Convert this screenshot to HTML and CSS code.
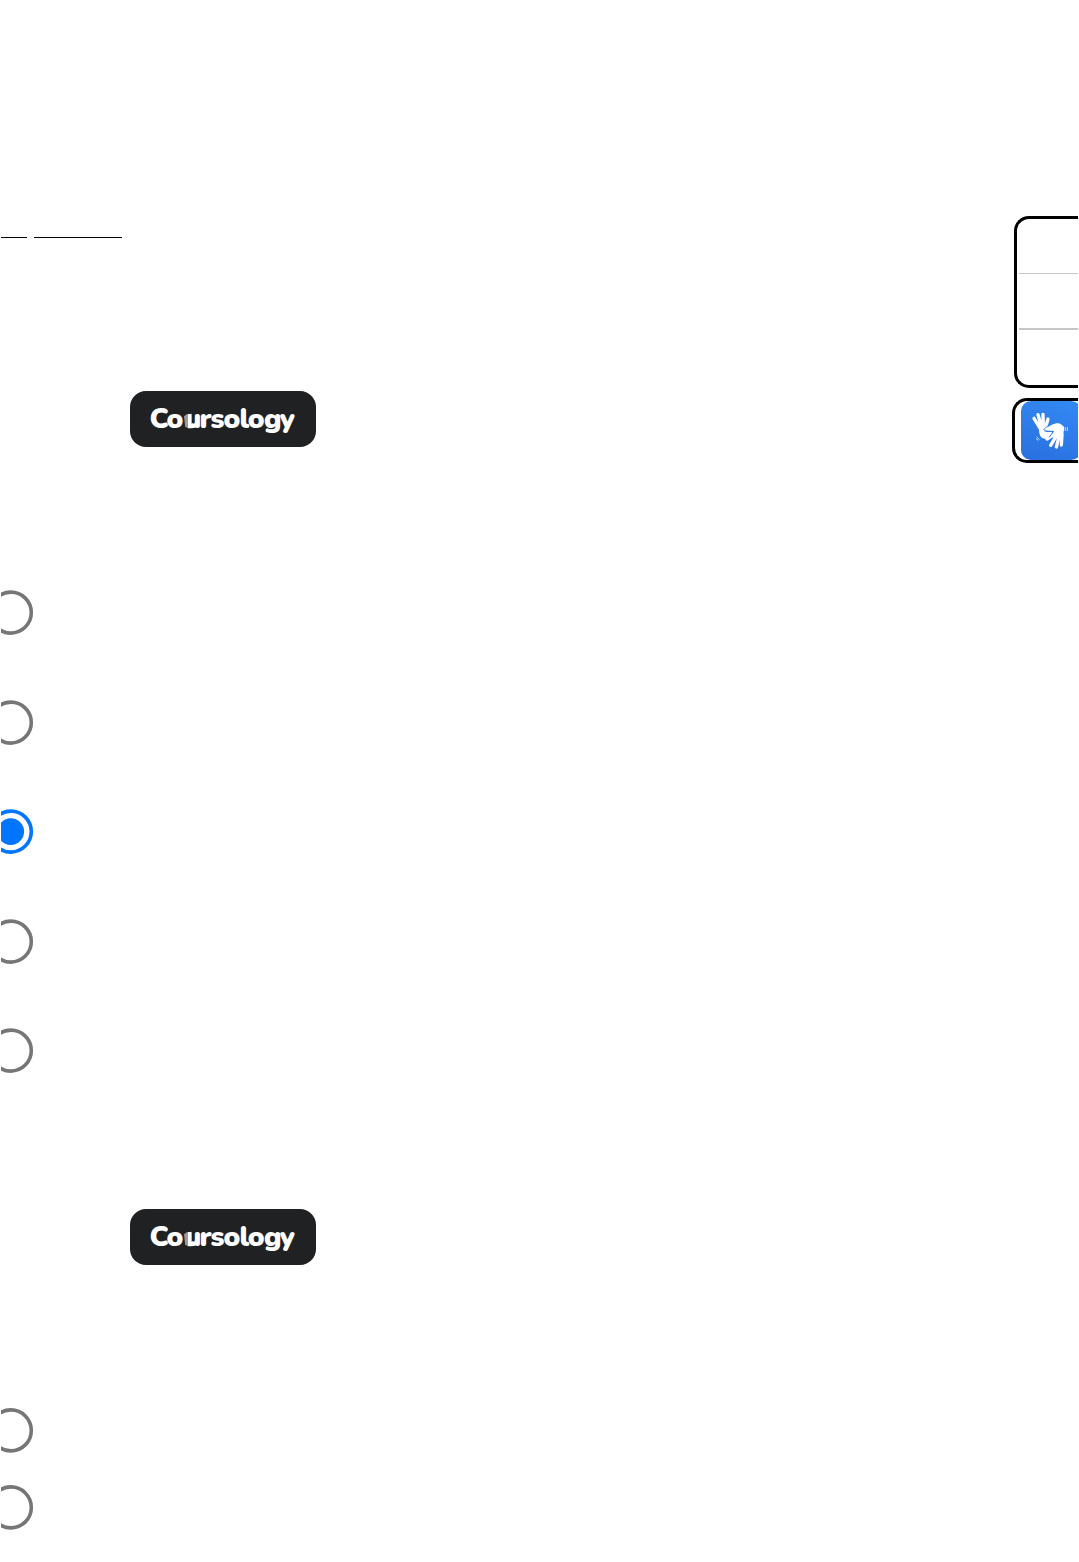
FILE: index.html
```
<!DOCTYPE html>
<html lang="en">

<head>
    <meta charset="UTF-8">
    <meta name="viewport" content="width=device-width, initial-scale=1.0">
    <title>Coursology</title>
    <link rel="stylesheet" href="styles.css">
</head>

<body>
    <div class="page">
        <main class="content">
            <div class="links">
                <span class="link-line short"></span>
                <span class="link-line"></span>
            </div>

            <button class="badge">
                <svg width="186" height="56" viewBox="0 0 186 56">
                    <text class="logo-text" y="36.5" x="19.5 36.6 54.4 69.6 80.4 93.4 109.4 117.8 134 149.8">Coursology</text>
                    <!-- pages of the book inside the "u" -->
                    <path class="logo-gap" d="M53.6 21h4v17h-4z" />
                    <path class="logo-page" d="M54 25.2l3.4-2.5v14l-2.2-.8z" />
                    <path class="logo-cover" d="M57.8 23.8l3.8-1v8.6c-.8 2.9-1.8 4.2-3.8 5.2zM57 37c2.5-1.5 4-3 5-5.2 1 1.7 3.8 1.3 5-.7l2 3c-2 3-6 3.5-12 2.9z" />
                </svg>
            </button>

            <div class="answers">
                <svg class="radio" viewBox="0 0 45 45"><circle cx="21.8" cy="22.6" r="20.5" /></svg>
                <svg class="radio" viewBox="0 0 45 45"><circle cx="21.8" cy="22.6" r="20.5" /></svg>
                <svg class="radio checked" viewBox="0 0 45 45"><circle cx="21.8" cy="22.6" r="20.5" /><circle class="dot" cx="21.8" cy="22.6" r="13.3" /></svg>
                <svg class="radio" viewBox="0 0 45 45"><circle cx="21.8" cy="22.6" r="20.5" /></svg>
                <svg class="radio" viewBox="0 0 45 45"><circle cx="21.8" cy="22.6" r="20.5" /></svg>
            </div>

            <button class="badge second">
                <svg width="186" height="56" viewBox="0 0 186 56">
                    <text class="logo-text" y="36.5" x="19.5 36.6 54.4 69.6 80.4 93.4 109.4 117.8 134 149.8">Coursology</text>
                    <path class="logo-gap" d="M53.6 21h4v17h-4z" />
                    <path class="logo-page" d="M54 25.2l3.4-2.5v14l-2.2-.8z" />
                    <path class="logo-cover" d="M57.8 23.8l3.8-1v8.6c-.8 2.9-1.8 4.2-3.8 5.2zM57 37c2.5-1.5 4-3 5-5.2 1 1.7 3.8 1.3 5-.7l2 3c-2 3-6 3.5-12 2.9z" />
                </svg>
            </button>

            <div class="answers compact">
                <svg class="radio" viewBox="0 0 45 45"><circle cx="21.8" cy="22.4" r="20.5" /></svg>
                <svg class="radio" viewBox="0 0 45 45"><circle cx="21.8" cy="22.4" r="20.5" /></svg>
            </div>
        </main>

        <aside class="tools">
            <div class="tool-list">
                <div class="tool"></div>
                <div class="tool thick"></div>
                <div class="tool last"></div>
            </div>
            <div class="sign-box">
                <div class="sign">
                    <svg class="hands" width="48" height="54" viewBox="0 0 144 150">
                        <g class="fingers">
                            <path d="M18 40l18 29M30 29l10 34M45 28l1 35M60 42l-7 24" />
                            <path d="M82 85l-25 17M86 91l-18 30M94 92l-9 34M102 90l-2 30" />
                        </g>
                        <path class="palm" d="M31 62l27-3 2 8-10 9 7 5 16-1-2 7c-5 9-10 13-19 14-12 0-16-8-18-17-1-8-2-15-3-22z" />
                        <path class="palm" d="M51 73c10-8 17-14 29-17 8-2 14-2 18 1l10 8c2 4 0 9-1 15l-2 16-29 5-4-8 6-15-19-1c-5 0-10-1-8-4z" />
                        <path class="crease" d="M47 75c2-5 8-9 14-13M48 76c3 5 18 3 27 3-2 7-8 13-12 18" />
                        <path class="motion" d="M112 67v11M118 66v12M26 95l8 9M24 101l7 5" />
                    </svg>
                </div>
            </div>
        </aside>
    </div>
</body>

</html>
```
FILE: styles.css
```
* {
    box-sizing: border-box;
}

body {
    margin: 0;
    padding: 0 1px;
    background: #fff;
    font-family: Lato, sans-serif;
}

.page {
    display: flex;
    justify-content: space-between;
    height: 1562px;
    overflow: hidden;
}

.content {
    width: 400px;
}

.links {
    display: flex;
    gap: 7px;
    margin-top: 237px;
}

.link-line {
    width: 88px;
    height: 1px;
    background: #000;
}

.link-line.short {
    width: 26px;
}

.badge {
    display: block;
    width: 186px;
    height: 56px;
    margin: 153px 0 0 129px;
    padding: 0;
    border: 0;
    border-radius: 16px;
    background: #202123;
}

.badge.second {
    margin-top: 135.6px;
}

.badge svg {
    display: block;
}

.logo-text {
    font-family: Nunito, Lato, sans-serif;
    font-size: 28px;
    font-weight: 900;
    fill: #fff;
}

.logo-gap {
    fill: #202123;
}

.logo-page {
    fill: #98999a;
}

.logo-cover {
    fill: #fff;
}

/* the left part of every radio is cut off by the page edge */
.answers {
    display: flex;
    flex-direction: column;
    gap: 64.5px;
    margin: 143.3px 0 0 -12px;
}

.answers.compact {
    gap: 31.5px;
    margin-top: 143.3px;
}

.radio {
    display: block;
    width: 45px;
    height: 45px;
    fill: none;
    stroke: #767676;
    stroke-width: 3.6;
}

.radio.checked {
    stroke: #0075ff;
}

.radio .dot {
    fill: #0075ff;
    stroke: none;
}

.tools {
    display: flex;
    flex-direction: column;
    align-items: flex-end;
    padding-top: 216px;
}

.tool-list {
    width: 64px;
    height: 172px;
    padding-left: 2px;
    border: 3px solid #000;
    border-right: 0;
    border-radius: 15px 0 0 15px;
}

.tool {
    height: 55px;
    border-bottom: 1px solid #c6c6c6;
}

.tool.thick {
    height: 56px;
    border-bottom-width: 2px;
}

.tool.last {
    border: 0;
}

.sign-box {
    width: 66px;
    height: 65px;
    margin-top: 10px;
    padding-left: 6px;
    border: 3px solid #000;
    border-right: 0;
    border-radius: 15px 0 0 15px;
}

.sign {
    width: 60px;
    height: 59px;
    border-radius: 10px;
    background: linear-gradient(200deg, #338af3, #296fdf);
}

.hands {
    display: block;
    margin: 0 0 0 7px;
    padding-top: 4px;
}

.fingers {
    fill: none;
    stroke: #fff;
    stroke-width: 10;
    stroke-linecap: round;
}

.palm {
    fill: #fff;
}

.crease {
    fill: none;
    stroke: #2d7ae8;
    stroke-width: 3;
}

.motion {
    fill: none;
    stroke: #dcebff;
    stroke-width: 2.5;
}
```
